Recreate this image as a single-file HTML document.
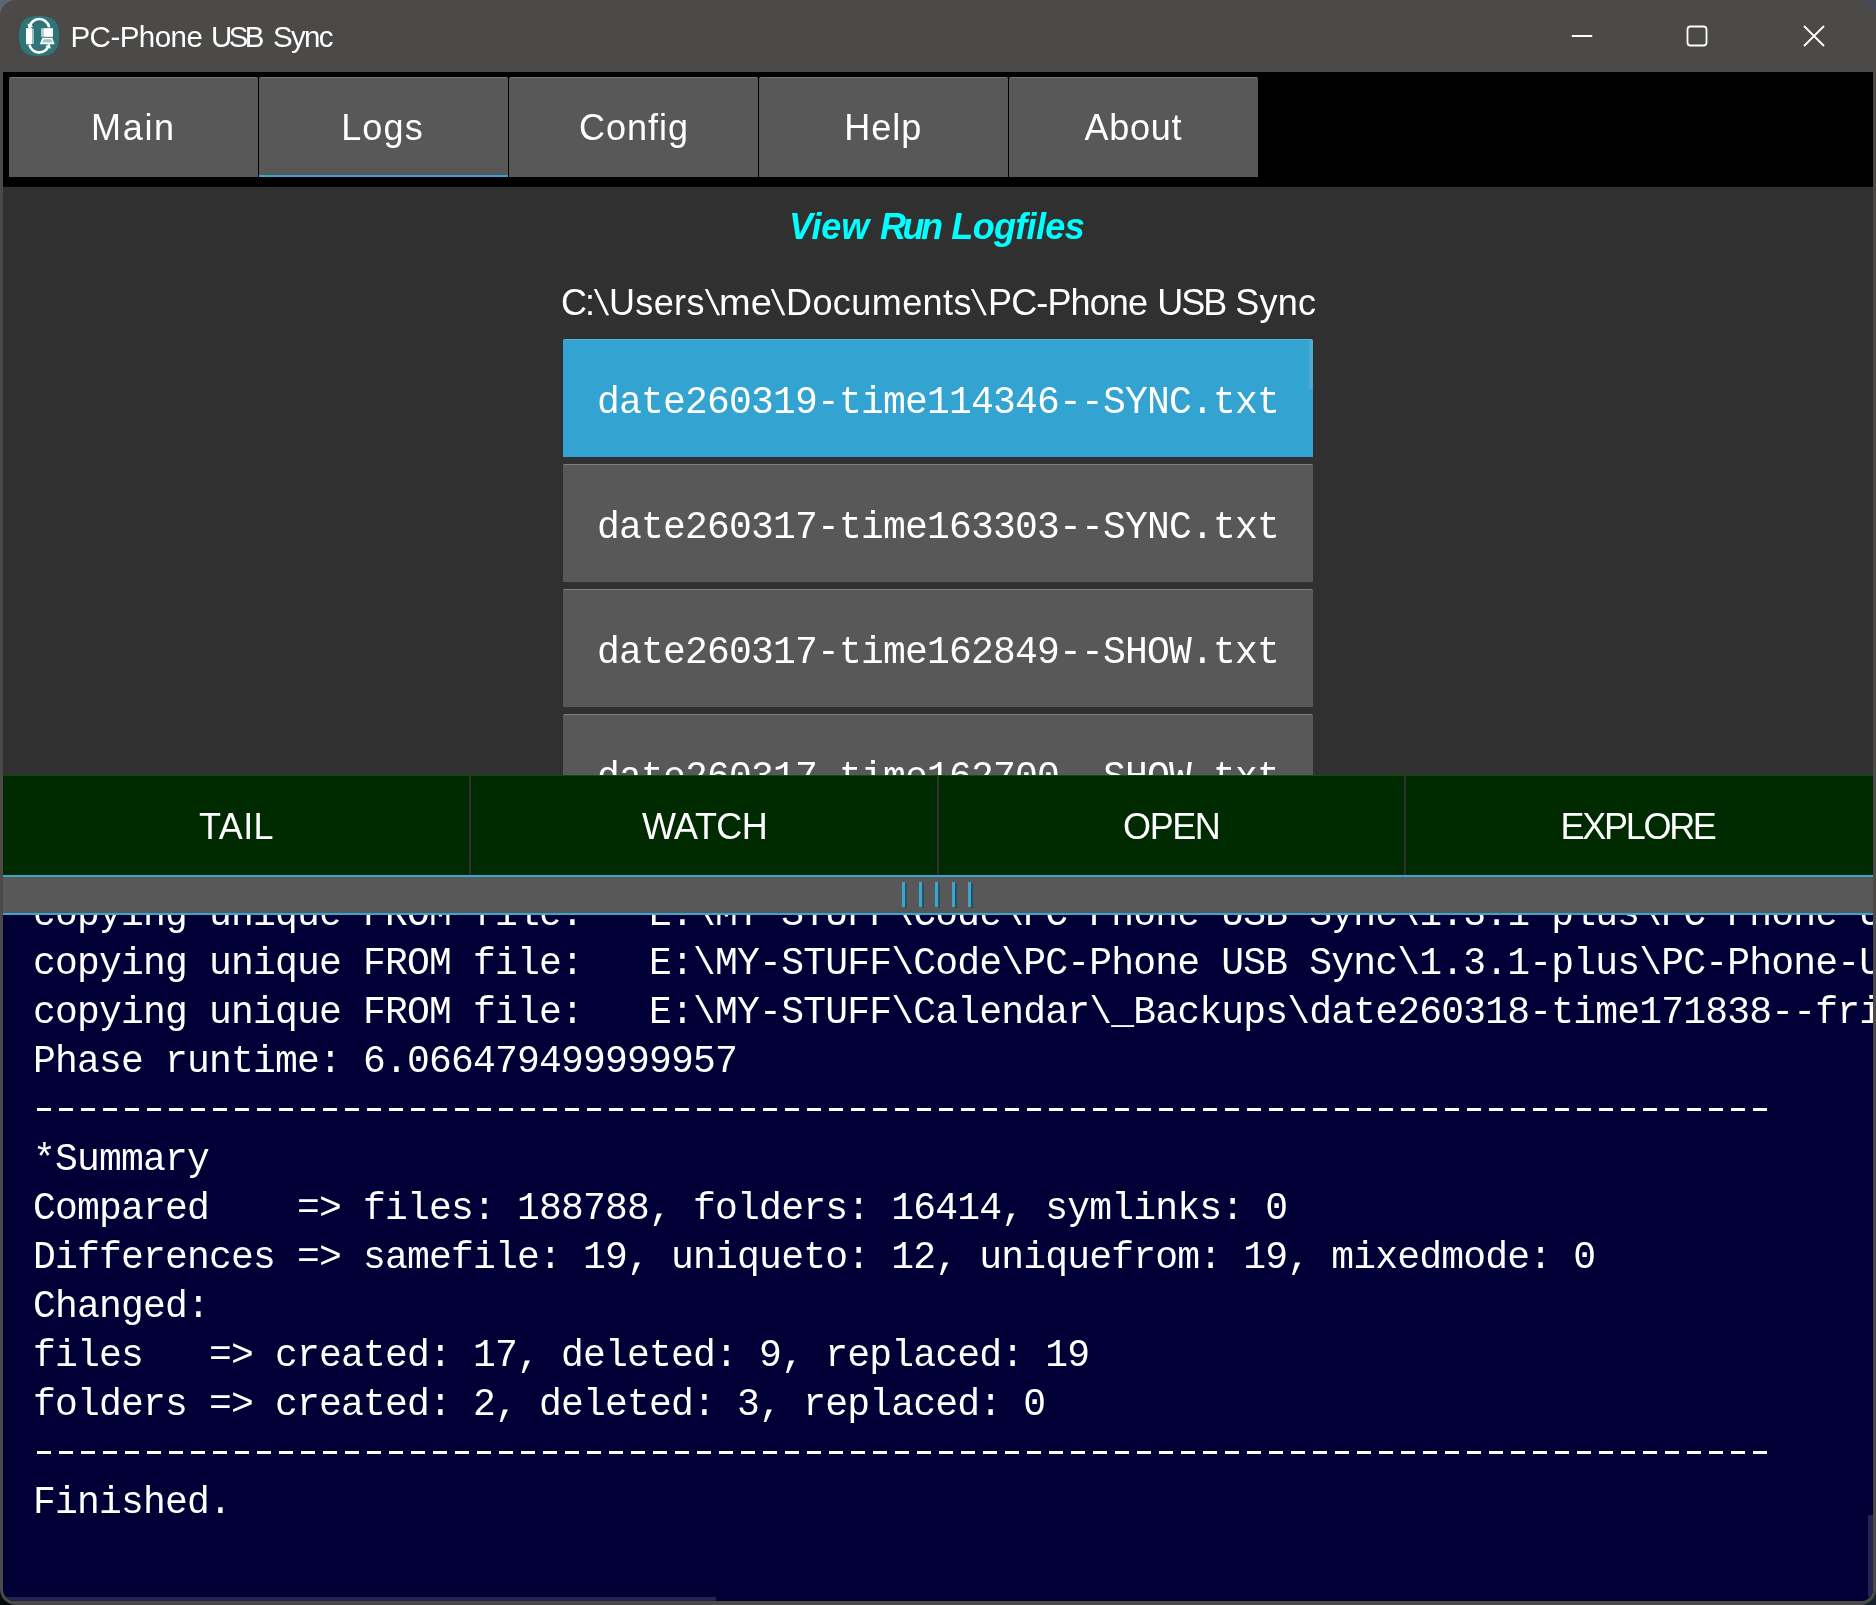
<!DOCTYPE html>
<html>
<head>
<meta charset="utf-8">
<title>PC-Phone USB Sync</title>
<style>
html,body{margin:0;padding:0;}
body{width:1876px;height:1605px;overflow:hidden;position:relative;background:#000;font-family:"Liberation Sans",sans-serif;color:#fff;}
.abs{position:absolute;}
/* desktop showing behind rounded corners */
.ctl{left:0;top:0;width:40px;height:40px;background:#5b6772;}
.ctr{right:0;top:0;width:40px;height:40px;background:#444a58;}
.cbl{left:0;bottom:0;width:40px;height:40px;background:#050808;}
.cbr{right:0;bottom:0;width:40px;height:40px;background:#18202e;}
#win{will-change:transform;left:0;top:0;width:1876px;height:1605px;background:#4b4a48;border-radius:16px;overflow:hidden;}
#client{left:3px;top:72px;width:1870px;height:1529px;background:#303030;border-radius:0 0 12px 12px;overflow:hidden;}
/* title bar */
.lbl{position:absolute;white-space:nowrap;line-height:1;color:#fff;}
.ttl{top:22px;font-size:29.5px;margin-left:0.4px;}
/* tabs */
#tabbar{left:0;top:0;width:1870px;height:115px;background:#000;}
.tab{top:5px;width:249px;height:100px;background:#585858;box-sizing:border-box;border-top:1px solid #787878;border-radius:2px 2px 0 0;}
.tl{font-size:36px;top:40px;}
.tab.sel{border-bottom:2px solid #33a5d8;}
/* heading */
.hdr{top:137px;font-size:36px;font-weight:bold;font-style:italic;color:#00ffff;}
.pth{top:213px;font-size:36px;}
.bs{transform-origin:0 0;}
/* list */
.item{border-radius:2px 2px 0 0;left:560px;width:750px;height:118px;background:#585858;box-sizing:border-box;border-top:1px solid #808080;text-align:center;line-height:126px;font-family:"Liberation Mono",monospace;font-size:38px;letter-spacing:-0.8px;color:#fff;white-space:nowrap;overflow:hidden;}
.item.sel{background:#33a4d1;border-top:1px solid #56b4da;}
/* buttons */
#btnbar{left:0;top:703px;width:1870px;height:100px;background:#002a00;box-sizing:border-box;border-top:1px solid #0f4a0f;}
.btn{top:0;height:100px;width:467px;box-sizing:border-box;}
.sep{top:1px;width:2px;height:99px;background:#322f33;}
.bl{font-size:36px;top:738px;}
/* splitter */
#split{left:0;top:803px;width:1870px;height:40px;background:#585858;box-sizing:border-box;border-top:2px solid #3da4cc;border-bottom:2px solid #3da4cc;}
.grip{top:5px;width:3px;height:25px;background:#3da4cc;box-shadow:2px 1px 0 #1f5566;}
/* log */
#log{left:0;top:843px;width:1870px;height:686px;background:#000036;overflow:hidden;}
#logtxt{left:30px;top:-25px;margin:0;font-family:"Liberation Mono",monospace;font-size:38px;letter-spacing:-0.8px;line-height:49px;color:#fff;white-space:pre;}
.dash{left:34px;width:1730px;height:3px;background:repeating-linear-gradient(90deg,#fff 0,#fff 14px,transparent 14px,transparent 22px);}
</style>
</head>
<body>
<div class="abs ctl"></div><div class="abs ctr"></div><div class="abs cbl"></div><div class="abs cbr"></div>
<div id="win" class="abs">
  <!-- app icon -->
  <svg class="abs" style="left:19px;top:16px" width="40" height="40" viewBox="0 0 40 40">
    <path d="M20 0 C34 0 40 5 40 20 C40 35 34 40 20 40 C6 40 0 35 0 20 C0 5 6 0 20 0 Z" fill="#2f7577"/>
    <path d="M10.4 11 A10 9.9 0 0 1 30.1 11.4" fill="none" stroke="#fff" stroke-width="2.7"/>
    <path d="M8.4 7.4 L14.2 10.2 L9.8 13 Z" fill="#fff"/>
    <path d="M10.4 28.7 A10 10 0 0 0 29.4 30.2" fill="none" stroke="#fff" stroke-width="2.7"/>
    <path d="M31.8 32.8 L26.2 30.4 L30.6 27.2 Z" fill="#fff"/>
    <rect x="7" y="12.2" width="6.2" height="16" fill="#fff"/>
    <rect x="13.2" y="12.6" width="1.6" height="15.2" fill="#a8cfd0"/>
    <rect x="22" y="12.2" width="2.4" height="8.6" fill="#a8cfd0"/>
    <rect x="24.4" y="12.2" width="9.6" height="8.6" fill="#fff"/>
    <path d="M23.4 21.8 H33.2 L35.6 28.2 H20.8 Z" fill="#fff"/>
    <path d="M24.6 23.2 H32.2 L33.4 26.4 H23.4 Z" fill="#9ccbcb"/>
  </svg>
  <span id="w1" class="lbl ttl" style="left:70.1px;letter-spacing:-0.54px">PC-Phone</span><span id="w2" class="lbl ttl" style="left:210.5px;letter-spacing:-3.55px">USB</span><span id="w3" class="lbl ttl" style="left:272.5px;letter-spacing:-1.66px">Sync</span>
  <!-- window controls -->
  <svg class="abs" style="left:1560px;top:14px" width="280" height="44" viewBox="0 0 280 44" fill="none" stroke="#fff" stroke-width="1.8" stroke-linecap="round">
    <path d="M12.5 22 H31.5"/>
    <rect x="127.5" y="12.5" width="19" height="19" rx="3" ry="3"/>
    <path d="M244.5 12.5 L263.5 31.5 M263.5 12.5 L244.5 31.5"/>
  </svg>

  <div id="client" class="abs">
    <div id="tabbar" class="abs">
      <div class="abs tab" style="left:6px"></div>
      <div class="abs tab sel" style="left:256px"></div>
      <div class="abs tab" style="left:506px"></div>
      <div class="abs tab" style="left:756px"></div>
      <div class="abs tab" style="left:1006px"></div>
      <span id="t1" class="lbl tl" style="left:88.1px;top:38.0px;letter-spacing:1.66px">Main</span>
      <span id="t2" class="lbl tl" style="left:338.2px;top:38.0px;letter-spacing:1.15px">Logs</span>
      <span id="t3" class="lbl tl" style="left:575.9px;top:38.0px;letter-spacing:1.0px">Config</span>
      <span id="t4" class="lbl tl" style="left:841.2px;top:38.0px;letter-spacing:1.02px">Help</span>
      <span id="t5" class="lbl tl" style="left:1081.6px;top:38.0px;letter-spacing:0.72px">About</span>
    </div>
    <span id="h1" class="lbl hdr" style="left:786.1px;letter-spacing:-0.22px">View</span><span id="h2" class="lbl hdr" style="left:877.0px;letter-spacing:-3.55px">Run</span><span id="h3" class="lbl hdr" style="left:948.3px;letter-spacing:-0.66px">Logfiles</span>
    <span id="p1" class="lbl pth" style="left:558.0px;letter-spacing:-2.0px">C:</span><span id="p2" class="lbl pth bs" style="left:590.2px;transform:skewX(11.27deg)">\</span><span id="p3" class="lbl pth" style="left:606.0px;letter-spacing:0.35px">Users</span><span id="p4" class="lbl pth bs" style="left:701.0px;transform:skewX(11.27deg)">\</span><span id="p5" class="lbl pth bs" style="left:716.3px;letter-spacing:0px;transform:scaleX(1.056)">me</span><span id="p6" class="lbl pth bs" style="left:767.4px;transform:skewX(9.71deg)">\</span><span id="p7" class="lbl pth" style="left:783.0px;letter-spacing:0.42px">Documents</span><span id="p8" class="lbl pth bs" style="left:967.4px;transform:skewX(12.56deg)">\</span><span id="p9" class="lbl pth" style="left:985.0px;letter-spacing:-0.87px">PC-Phone</span><span id="p10" class="lbl pth" style="left:1154.3px;letter-spacing:-2.01px">USB</span><span id="p11" class="lbl pth" style="left:1232.2px;letter-spacing:0.25px">Sync</span>

    <div class="abs item sel" style="top:267px">date260319-time114346--SYNC.txt</div>
    <div class="abs item" style="top:392px">date260317-time163303--SYNC.txt</div>
    <div class="abs item" style="top:517px">date260317-time162849--SHOW.txt</div>
    <div class="abs item" style="top:642px">date260317-time162700--SHOW.txt</div>
    <div class="abs" style="left:1306px;top:268px;width:4px;height:49px;background:#4eaad0"></div>

    <div id="btnbar" class="abs">
      <div class="abs sep" style="left:466px;top:0"></div>
      <div class="abs sep" style="left:934px;top:0"></div>
      <div class="abs sep" style="left:1401px;top:0"></div>
    </div>
    <span id="b1" class="lbl bl" style="left:196.0px;top:737.0px;letter-spacing:0.42px">TAIL</span>
    <span id="b2" class="lbl bl" style="left:639.0px;top:737.0px;letter-spacing:-0.54px">WATCH</span>
    <span id="b3" class="lbl bl" style="left:1120.1px;top:737.0px;letter-spacing:-1.46px">OPEN</span>
    <span id="b4" class="lbl bl" style="left:1557.6px;top:737.0px;letter-spacing:-2.3px">EXPLORE</span>

    <div id="split" class="abs">
      <div class="abs grip" style="left:899px"></div>
      <div class="abs grip" style="left:916px"></div>
      <div class="abs grip" style="left:932px"></div>
      <div class="abs grip" style="left:949px"></div>
      <div class="abs grip" style="left:965px"></div>
    </div>

    <div id="log" class="abs">
<pre id="logtxt" class="abs">copying unique FROM file:   E:\MY STUFF\Code\PC Phone USB Sync\1.3.1 plus\PC Phone USB Sync
copying unique FROM file:   E:\MY-STUFF\Code\PC-Phone USB Sync\1.3.1-plus\PC-Phone-USB-Sync
copying unique FROM file:   E:\MY-STUFF\Calendar\_Backups\date260318-time171838--frigcal
Phase runtime: 6.066479499999957

*Summary
Compared    =&gt; files: 188788, folders: 16414, symlinks: 0
Differences =&gt; samefile: 19, uniqueto: 12, uniquefrom: 19, mixedmode: 0
Changed:
files   =&gt; created: 17, deleted: 9, replaced: 19
folders =&gt; created: 2, deleted: 3, replaced: 0

Finished.</pre>
      <div class="abs dash" style="top:193px"></div>
      <div class="abs dash" style="top:536px"></div>
      <div class="abs" style="left:0;top:682px;width:713px;height:4px;background:#242354"></div>
      <div class="abs" style="left:1865px;top:600px;width:5px;height:82px;background:#242354"></div>
    </div>
  </div>
</div>
</body>
</html>
